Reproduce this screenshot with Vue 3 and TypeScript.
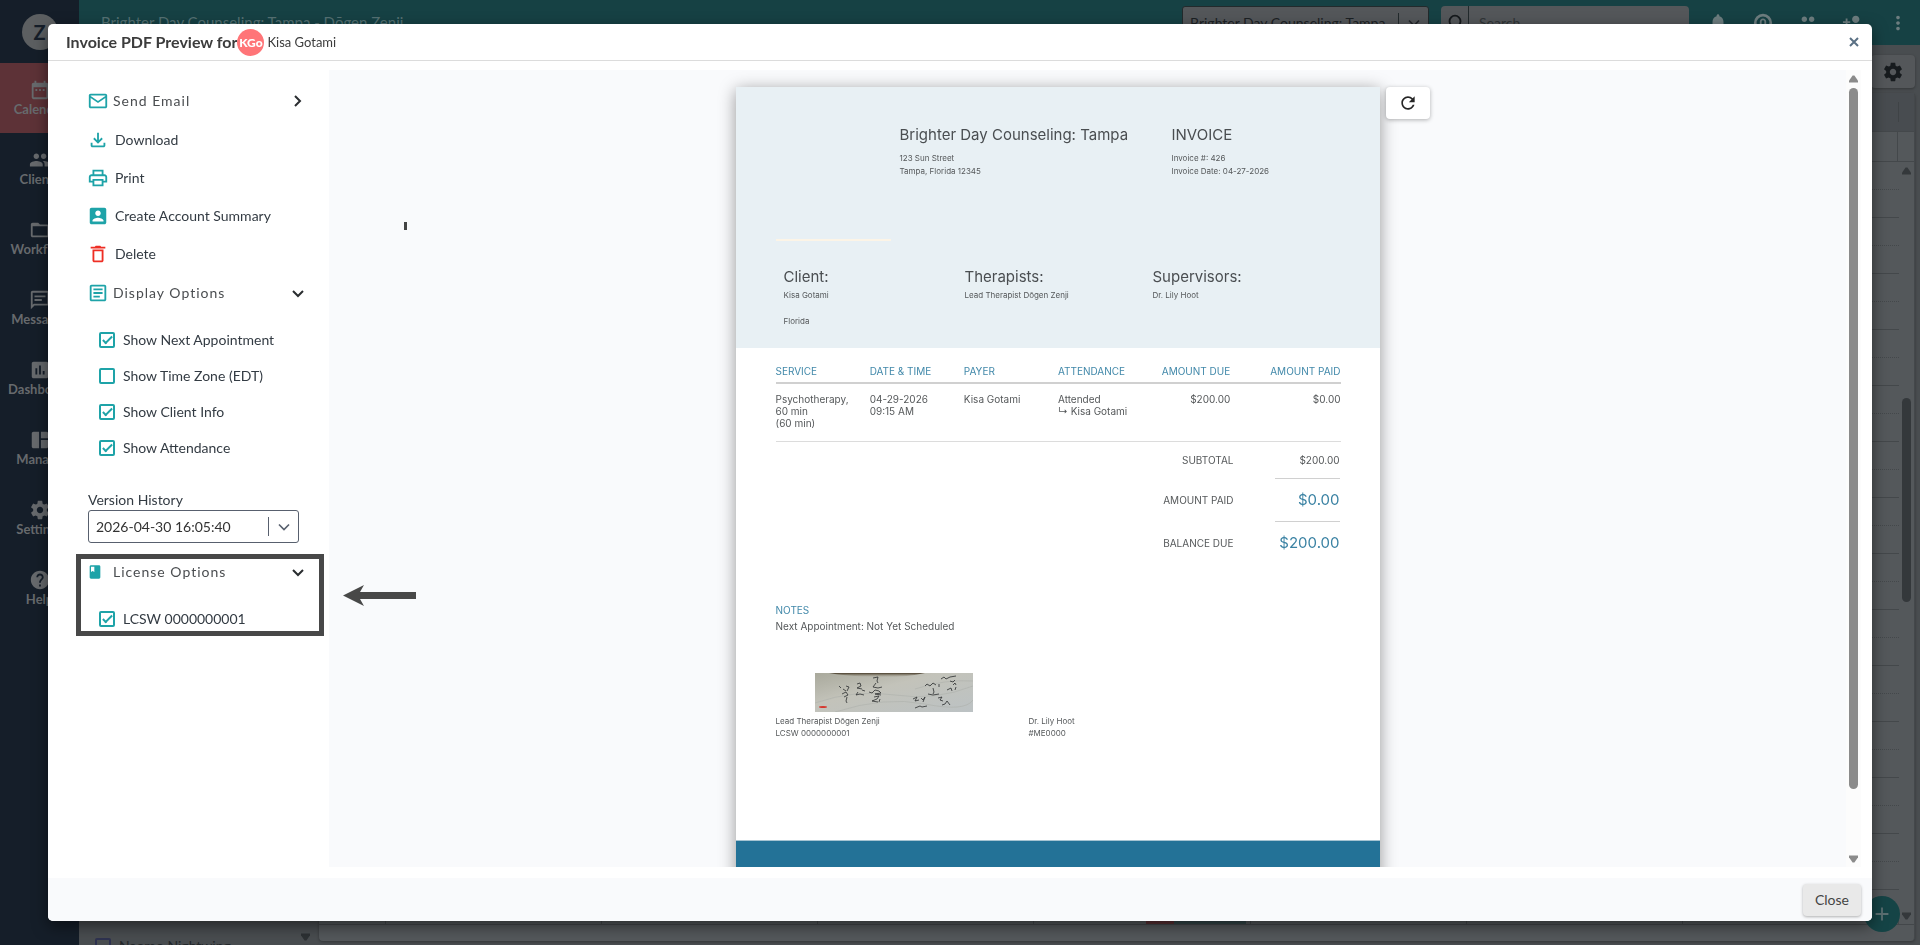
<script setup lang="ts">
import { ref } from 'vue'

const paths = {
  event: 'M9 11H7v2h2v-2zm4 0h-2v2h2v-2zm4 0h-2v2h2v-2zm2-7h-1V2h-2v2H8V2H6v2H5c-1.11 0-1.99.9-1.99 2L3 20c0 1.1.89 2 2 2h14c1.1 0 2-.9 2-2V6c0-1.1-.9-2-2-2zm0 16H5V9h14v11z',
  group: 'M16 11c1.66 0 2.99-1.34 2.99-3S17.66 5 16 5c-1.66 0-3 1.34-3 3s1.34 3 3 3zm-8 0c1.66 0 2.99-1.34 2.99-3S9.66 5 8 5C6.34 5 5 6.34 5 8s1.34 3 3 3zm0 2c-2.33 0-7 1.17-7 3.5V19h14v-2.5c0-2.33-4.67-3.5-7-3.5zm8 0c-.29 0-.62.02-.97.05 1.16.84 1.97 1.97 1.97 3.45V19h6v-2.5c0-2.33-4.67-3.5-7-3.5z',
  folder: 'M20 6h-8l-2-2H4c-1.1 0-1.99.9-1.99 2L2 18c0 1.1.9 2 2 2h16c1.1 0 2-.9 2-2V8c0-1.1-.9-2-2-2zm0 12H4V8h16v10z',
  chat: 'M4 4h16v12H5.17L4 17.17V4m0-2c-1.1 0-1.99.9-1.99 2L2 22l4-4h14c1.1 0 2-.9 2-2V4c0-1.1-.9-2-2-2H4zm2 9h8v2H6v-2zm0-4h12v2H6V7z',
  chart: 'M19 3H5c-1.1 0-2 .9-2 2v14c0 1.1.9 2 2 2h14c1.1 0 2-.9 2-2V5c0-1.1-.9-2-2-2zM9 17H7v-7h2v7zm4 0h-2V7h2v10zm4 0h-2v-4h2v4z',
  board: 'M11 21H5c-1.1 0-2-.9-2-2V5c0-1.1.9-2 2-2h6v18zm2 0h6c1.1 0 2-.9 2-2v-7h-8v9zm8-11V5c0-1.1-.9-2-2-2h-6v7h8z',
  gear: 'M19.43 12.98c.04-.32.07-.64.07-.98s-.03-.66-.07-.98l2.11-1.65c.19-.15.24-.42.12-.64l-2-3.46c-.12-.22-.39-.3-.61-.22l-2.49 1c-.52-.4-1.08-.73-1.69-.98l-.38-2.65C14.46 2.18 14.25 2 14 2h-4c-.25 0-.46.18-.49.42l-.38 2.65c-.61.25-1.17.59-1.69.98l-2.49-1c-.23-.09-.49 0-.61.22l-2 3.46c-.13.22-.07.49.12.64l2.11 1.65c-.04.32-.07.65-.07.98s.03.66.07.98l-2.11 1.65c-.19.15-.24.42-.12.64l2 3.46c.12.22.39.3.61.22l2.49-1c.52.4 1.08.73 1.69.98l.38 2.65c.03.24.24.42.49.42h4c.25 0 .46-.18.49-.42l.38-2.65c.61-.25 1.17-.59 1.69-.98l2.49 1c.23.09.49 0 .61-.22l2-3.46c.12-.22.07-.49-.12-.64l-2.11-1.65zM12 15.5c-1.93 0-3.5-1.57-3.5-3.5s1.57-3.5 3.5-3.5 3.5 1.57 3.5 3.5-1.57 3.5-3.5 3.5z',
  help: 'M12 2C6.48 2 2 6.48 2 12s4.48 10 10 10 10-4.48 10-10S17.52 2 12 2zm1 17h-2v-2h2v2zm2.07-7.75l-.9.92C13.45 12.9 13 13.5 13 15h-2v-.5c0-1.1.45-2.1 1.17-2.83l1.24-1.26c.37-.36.59-.86.59-1.41 0-1.1-.9-2-2-2s-2 .9-2 2H8c0-2.21 1.79-4 4-4s4 1.79 4 4c0 .88-.36 1.68-.93 2.25z',
  bell: 'M12 22c1.1 0 2-.9 2-2h-4c0 1.1.89 2 2 2zm6-6v-5c0-3.07-1.64-5.64-4.5-6.32V4c0-.83-.67-1.5-1.5-1.5s-1.5.67-1.5 1.5v.68C7.63 5.36 6 7.92 6 11v5l-2 2v1h16v-1l-2-2z',
  target: 'M12 2a10 10 0 1 0 0 20 10 10 0 0 0 0-20zm0 3a7 7 0 1 1 0 14 7 7 0 0 1 0-14zm0 2c-2 0-3.500 1.600-3.500 3.500V15h2v-4.500a1.500 1.500 0 0 1 3 0V15h2v-4.500C15.500 8.600 14 7 12 7z',
  addPerson: 'M15 12c2.21 0 4-1.79 4-4s-1.79-4-4-4-4 1.79-4 4 1.79 4 4 4zm-9-2V7H4v3H1v2h3v3h2v-3h3v-2H6zm9 4c-2.67 0-8 1.34-8 4v2h16v-2c0-2.66-5.33-4-8-4z',
  dots: 'M12 8c1.100 0 2-.9 2-2s-.9-2-2-2-2 .9-2 2 .9 2 2 2zm0 2c-1.100 0-2 .9-2 2s.9 2 2 2 2-.9 2-2-.9-2-2-2zm0 6c-1.100 0-2 .9-2 2s.9 2 2 2 2-.9 2-2-.9-2-2-2z',
  mail: 'M20 4H4c-1.1 0-2 .9-2 2v12c0 1.1.9 2 2 2h16c1.1 0 2-.9 2-2V6c0-1.1-.9-2-2-2zm0 2v.5l-8 5.500-8-5.500V6h16zM4 18V8.800l8 5.400 8-5.400V18H4z',
  download: 'M11 4h2v8.200l2.800-2.800 1.400 1.400L12 16l-5.200-5.200 1.400-1.400 2.800 2.800V4zM4 15h2v3h12v-3h2v3c0 1.100-.9 2-2 2H6c-1.100 0-2-.9-2-2v-3z',
  print: 'M19 8h-1V3H6v5H5c-1.66 0-3 1.34-3 3v6h4v4h12v-4h4v-6c0-1.66-1.34-3-3-3zM8 5h8v3H8V5zm8 12v2H8v-4h8v2zm2-2v-2H6v2H4v-4c0-.55.45-1 1-1h14c.55 0 1 .45 1 1v4h-2z',
  account: 'M3 5v14c0 1.1.89 2 2 2h14c1.1 0 2-.9 2-2V5c0-1.1-.9-2-2-2H5c-1.11 0-2 .9-2 2zm12 4c0 1.66-1.34 3-3 3s-3-1.34-3-3 1.34-3 3-3 3 1.34 3 3zm-9 8c0-2 4-3.1 6-3.1s6 1.1 6 3.1v1H6v-1z',
  trash: 'M6 19c0 1.1.9 2 2 2h8c1.1 0 2-.9 2-2V7H6v12zM8 9h8v10H8V9zm7.5-5l-1-1h-5l-1 1H4v2h16V4z',
  article: 'M19 5v14H5V5h14m0-2H5c-1.1 0-2 .9-2 2v14c0 1.1.9 2 2 2h14c1.1 0 2-.9 2-2V5c0-1.1-.9-2-2-2zM14 17H7v-2h7v2zm3-4H7v-2h10v2zm0-4H7V7h10v2z',
  book: 'M18 2H6c-1.100 0-2 .9-2 2v16c0 1.100.9 2 2 2h12c1.100 0 2-.9 2-2V4c0-1.100-.9-2-2-2zM6 4h5v8l-2.500-1.500L6 12V4z',
  refresh: 'M17.65 6.35C16.2 4.9 14.21 4 12 4c-4.42 0-7.99 3.58-7.99 8s3.57 8 7.99 8c3.73 0 6.84-2.55 7.73-6h-2.08c-.82 2.33-3.04 4-5.65 4-3.31 0-6-2.69-6-6s2.69-6 6-6c1.66 0 3.14.69 4.22 1.78L13 11h7V4l-2.35 2.35z',
}

const nav = [
  { label: 'Calendar', icon: paths.event, active: true },
  { label: 'Clients', icon: paths.group },
  { label: 'Workflow', icon: paths.folder },
  { label: 'Messages', icon: paths.chat },
  { label: 'Dashboard', icon: paths.chart },
  { label: 'Manage', icon: paths.board },
  { label: 'Settings', icon: paths.gear },
  { label: 'Help', icon: paths.help },
]
const tools = [
  { label: 'Notifications', icon: paths.bell },
  { label: 'Support', icon: paths.target },
  { label: 'Clients', icon: paths.group },
  { label: 'Add client', icon: paths.addPerson },
  { label: 'More', icon: paths.dots },
]
const actions = [
  { label: 'Download', icon: paths.download },
  { label: 'Print', icon: paths.print },
  { label: 'Create Account Summary', icon: paths.account },
  { label: 'Delete', icon: paths.trash, danger: true },
]
const display = ref([
  { label: 'Show Next Appointment', on: true },
  { label: 'Show Time Zone (EDT)', on: false },
  { label: 'Show Client Info', on: true },
  { label: 'Show Attendance', on: true },
])
const licenses = ref([{ label: 'LCSW 0000000001', on: true }])
const version = ref('2026-04-30 16:05:40')
const totals = [
  { label: 'SUBTOTAL', value: '$200.00', big: false },
  { label: 'AMOUNT PAID', value: '$0.00', big: true },
  { label: 'BALANCE DUE', value: '$200.00', big: true },
]
</script>

<template>
  <div class="app">
    <nav class="rail">
      <div class="logo"><span>Z</span></div>
      <a v-for="n in nav" :key="n.label" href="#" class="rail-item" :class="{ active: n.active }">
        <svg viewBox="0 0 24 24"><path :d="n.icon" /></svg>
        <span>{{ n.label }}</span>
      </a>
    </nav>
    <div class="main">
      <header class="topbar">
        <span class="practice">Brighter Day Counseling: Tampa - Dōgen Zenji</span>
        <div class="combo top-combo">
          <select aria-label="Location"><option>Brighter Day Counseling: Tampa</option></select>
          <i></i>
          <svg viewBox="0 0 24 24"><path d="M6 9l6 6 6-6" /></svg>
        </div>
        <div class="search">
          <button type="button" aria-label="Search">
            <svg viewBox="0 0 24 24"><circle cx="12" cy="10" r="6" /><path d="M16 14l5 6" /></svg>
          </button>
          <input type="text" placeholder="Search" aria-label="Search text" />
        </div>
        <div class="tools">
          <button v-for="t in tools" :key="t.label" type="button" :aria-label="t.label">
            <svg viewBox="0 0 24 24"><path :d="t.icon" /></svg>
          </button>
        </div>
      </header>
      <div class="workspace">
        <div class="toolbar">
          <button type="button" aria-label="Calendar settings"><svg viewBox="0 0 24 24"><path :d="paths.gear" /></svg></button>
        </div>
        <div class="split">
          <aside class="people">
            <label><input type="checkbox" />Naomo Nightwing</label>
            <svg viewBox="0 0 10 8"><path d="M0 0h10v2L6 8H4L0 2z" /></svg>
          </aside>
          <section class="calendar">
            <div class="cal-head"><i></i></div>
            <div class="cal-allday"><i></i></div>
            <div class="cal-body">
              <div class="cal-rows">
                <div v-for="r in 28" :key="r" class="cal-row"><span v-for="c in 8" :key="c" :class="{ booked: r === 28 && c === 5 }"></span></div>
              </div>
              <div class="bar">
                <svg viewBox="0 0 10 8"><path d="M4 0h2l4 6v2H0V6z" /></svg>
                <div class="bar-track"><div class="cal-thumb"></div></div>
                <svg viewBox="0 0 10 8"><path d="M0 0h10v2L6 8H4L0 2z" /></svg>
              </div>
            </div>
            <div class="cal-foot"></div>
          </section>
        </div>
      </div>
      <button type="button" class="fab" aria-label="Add"><svg viewBox="0 0 24 24"><path d="M12 5v14M5 12h14" /></svg></button>
    </div>

    <div class="overlay">
      <div class="dialog" role="dialog" aria-labelledby="dialog-title">
        <header class="dialog-head">
          <h1 id="dialog-title">Invoice PDF Preview for</h1>
          <span class="avatar">KGo</span>
          <span class="client">Kisa Gotami</span>
          <button type="button" class="dismiss" aria-label="Dismiss"><svg viewBox="0 0 12 12"><path d="M2 2l8 8M10 2l-8 8" /></svg></button>
        </header>
        <div class="dialog-body">
          <aside class="options">
            <button type="button" class="section-head">
              <svg class="ico" viewBox="0 0 24 24"><path :d="paths.mail" /></svg>
              <span>Send Email</span>
              <svg class="chev" viewBox="0 0 20 20"><path d="M7 5l5 5-5 5" /></svg>
            </button>
            <button v-for="a in actions" :key="a.label" type="button" class="action">
              <svg class="ico" :class="{ danger: a.danger }" viewBox="0 0 24 24"><path :d="a.icon" /></svg>
              <span>{{ a.label }}</span>
            </button>
            <button type="button" class="section-head">
              <svg class="ico" viewBox="0 0 24 24"><path :d="paths.article" /></svg>
              <span>Display Options</span>
              <svg class="chev" viewBox="0 0 20 20"><path d="M5 8l5 5 5-5" /></svg>
            </button>
            <div class="checks">
              <label v-for="d in display" :key="d.label"><input v-model="d.on" type="checkbox" />{{ d.label }}</label>
            </div>
            <div class="version">
              <label for="version">Version History</label>
              <div class="combo">
                <select id="version" v-model="version"><option>2026-04-30 16:05:40</option></select>
                <i></i>
                <svg viewBox="0 0 24 24"><path d="M6 9l6 6 6-6" /></svg>
              </div>
            </div>
            <div class="licenses">
              <button type="button" class="section-head">
                <svg class="ico book" viewBox="0 0 24 24"><path :d="paths.book" /></svg>
                <span>License Options</span>
                <svg class="chev" viewBox="0 0 20 20"><path d="M5 8l5 5 5-5" /></svg>
              </button>
              <div class="checks">
                <label v-for="l in licenses" :key="l.label"><input v-model="l.on" type="checkbox" />{{ l.label }}</label>
              </div>
              <div class="frame"></div>
              <svg class="arrow" viewBox="0 0 73 21"><path d="M0 10.500L21 0l-4 7h56v7H17l4 7z" /></svg>
            </div>
          </aside>

          <main class="preview">
            <div class="tick"></div>
            <div class="stage">
              <article class="page">
                <header class="inv-head">
                  <div class="inv-top">
                    <div class="inv-logo"></div>
                    <div>
                      <h2>Brighter Day Counseling: Tampa</h2>
                      <p>123 Sun Street</p>
                      <p>Tampa, Florida 12345</p>
                    </div>
                    <div>
                      <h2>INVOICE</h2>
                      <p>Invoice #: 426</p>
                      <p>Invoice Date: 04-27-2026</p>
                    </div>
                  </div>
                  <div class="inv-parties">
                    <div>
                      <h3>Client:</h3>
                      <p>Kisa Gotami</p>
                      <p class="second">Florida</p>
                    </div>
                    <div>
                      <h3>Therapists:</h3>
                      <p>Lead Therapist Dōgen Zenji</p>
                    </div>
                    <div>
                      <h3>Supervisors:</h3>
                      <p>Dr. Lily Hoot</p>
                    </div>
                  </div>
                </header>
                <div class="inv-body">
                  <table>
                    <thead>
                      <tr><th>SERVICE</th><th>DATE &amp; TIME</th><th>PAYER</th><th>ATTENDANCE</th><th class="num due">AMOUNT DUE</th><th class="num">AMOUNT PAID</th></tr>
                    </thead>
                    <tbody>
                      <tr>
                        <td>Psychotherapy,<br />60 min<br />(60 min)</td>
                        <td>04-29-2026<br />09:15 AM</td>
                        <td>Kisa Gotami</td>
                        <td>Attended<br />↳ Kisa Gotami</td>
                        <td class="num due">$200.00</td>
                        <td class="num">$0.00</td>
                      </tr>
                    </tbody>
                  </table>
                  <dl class="totals">
                    <div v-for="t in totals" :key="t.label">
                      <dt>{{ t.label }}</dt>
                      <dd :class="{ big: t.big }">{{ t.value }}</dd>
                    </div>
                  </dl>
                  <section class="notes">
                    <h4>NOTES</h4>
                    <p>Next Appointment: Not Yet Scheduled</p>
                  </section>
                  <div class="signatures">
                    <div>
                      <svg class="signature" viewBox="0 0 158 39">
                        <defs>
                          <linearGradient id="paper" x1="0" y1="0" x2="1" y2="1">
                            <stop offset="0" stop-color="#a9a99c" />
                            <stop offset="0.4" stop-color="#c3c3ba" />
                            <stop offset="1" stop-color="#bcc2c4" />
                          </linearGradient>
                          <linearGradient id="shade" x1="0" y1="0" x2="0" y2="1">
                            <stop offset="0" stop-color="#453a28" />
                            <stop offset="1" stop-color="#9a927f" stop-opacity="0" />
                          </linearGradient>
                        </defs>
                        <rect width="158" height="39" fill="url(#paper)" />
                        <path d="M14 0H110Q90 5 60 4T14 0z" fill="url(#shade)" />
                        <path class="fold" d="M0 30q40-14 80-8t78-9M20 39q50-16 90-8t48-4M100 16q30-10 58-8" />
                        <path class="ink" d="M24 13l2 2M31 13l3 1-2 4M28 16l3 2M27 21l4-2 2 3-4 2M32 24l-1 4 1 2M42 11l3-1 1 3-4 2 5 1M43 19l-2 3 4-1 4 1M47 17l3 1M58 5l5-1-1 4 1 2M61 10l-3 4 5 1 4-1M54 19l3 1 3-3 4 1 2 2-6 1 6 1M59 24l5-1-2 3-5 2 6 1M65 26l-1 3" />
                        <path class="ink" d="M110 13l2-2 3 2 3-3 3 2M124 11v3M118 15l1 4-1 2M113 21l5 1 6-1M126 6l3-2 2 2 4-2 6-1M135 8l3 1 2-2M138 12l2-2 1 2M132 17l4-2 1 3M141 14l-1 3M98 26l4-2-2 4 4-1M106 25l2 2 2-3-2 5M100 35l5-2 2 1 5-1M123 25l4-1-2 3 3 1M127 32l3-1 2-3 3 4" />
                        <ellipse cx="8" cy="34" rx="4" ry="1" fill="#d5382f" />
                      </svg>
                      <p>Lead Therapist Dōgen Zenji</p>
                      <p>LCSW 0000000001</p>
                    </div>
                    <div class="supervisor">
                      <p>Dr. Lily Hoot</p>
                      <p>#ME0000</p>
                    </div>
                  </div>
                </div>
                <footer class="inv-foot"></footer>
              </article>
              <button type="button" class="reload" aria-label="Refresh"><svg viewBox="0 0 24 24"><path :d="paths.refresh" /></svg></button>
            </div>
            <div class="bar scroll">
              <svg viewBox="0 0 10 8"><path d="M4 0h2l4 6v2H0V6z" /></svg>
              <div class="bar-track"><div class="thumb"></div></div>
              <svg viewBox="0 0 10 8"><path d="M0 0h10v2L6 8H4L0 2z" /></svg>
            </div>
          </main>
        </div>
        <footer class="dialog-foot"><button type="button">Close</button></footer>
      </div>
    </div>
  </div>
</template>

<style>
body { margin: 0; }
</style>

<style scoped>
.app { display: flex; height: 100vh; overflow: hidden; background: #494d50; color: #333b43; font: 14px/18px Lato, "Open Sans", sans-serif; }
.app *, .app *::before { box-sizing: border-box; }
button, input, select { font: inherit; color: inherit; margin: 0; padding: 0; border: 0; background: none; }
h1, h2, h3, h4, p, dl, dd { margin: 0; font-weight: 400; }
svg { display: block; flex: none; fill: currentColor; }

.rail { flex: none; width: 79px; background: #151e29; color: #676a6d; }
.logo { display: flex; align-items: center; justify-content: center; height: 63px; }
.logo span { width: 36px; height: 36px; border-radius: 50%; background: #5c5f61; color: #151e29; font-size: 20px; line-height: 36px; font-weight: 700; text-align: center; }
.rail-item { display: flex; flex-direction: column; align-items: center; height: 70px; padding-top: 15px; color: inherit; text-decoration: none; line-height: 15px; font-size: 13px; font-weight: 700; }
.rail-item svg { width: 24px; height: 24px; padding: 1px; }
.rail-item.active { background: #5d3237; }

.main { flex: 1; min-width: 0; display: flex; flex-direction: column; position: relative; }
.topbar { flex: none; display: flex; align-items: center; height: 45px; padding: 0 10px 0 22px; background: #164144; color: #6d7d7f; }
.practice { flex: 1; font-size: 15px; line-height: 16px; padding-bottom: 2px; color: #557173; }
.combo { display: flex; align-items: center; height: 33px; border: 1px solid #58606e; border-radius: 3px; color: #333; }
.combo select { flex: 1; min-width: 0; height: 100%; padding-left: 7px; appearance: none; outline: 0; }
.combo i { width: 1px; height: 19px; background: #58606e; }
.combo svg { width: 20px; height: 20px; margin: 0 4px 0 5px; fill: none; stroke: #58606e; stroke-width: 2; }
.top-combo { width: 247px; border-color: #222a2c; background: #54575a; color: #1c2124; }
.top-combo i { background: #222a2c; }
.top-combo svg { stroke: #22272b; }
.search { display: flex; width: 248px; height: 33px; margin: 0 17px 0 12px; border-radius: 4px; overflow: hidden; background: #54575a; }
.search button { width: 28px; border-right: 1px solid #222a2c; color: #15191c; }
.search button svg { width: 22px; height: 22px; margin: auto; fill: none; stroke: currentColor; stroke-width: 2; }
.search input { flex: 1; min-width: 0; padding-left: 10px; }
.search input::placeholder { color: #303537; opacity: 1; }
.tools { display: flex; gap: 21px; }
.tools svg { width: 24px; height: 24px; padding: 1px; }

.workspace { flex: 1; display: flex; flex-direction: column; padding: 10px 5px 5px 0; }
.toolbar { display: flex; justify-content: flex-end; height: 38px; }
.toolbar button { width: 44px; height: 33px; border-radius: 4px; background: #54575a; color: #171b1e; box-shadow: 0 1px 3px rgba(0, 0, 0, 0.3); }
.toolbar svg { width: 22px; height: 22px; margin: auto; }
.split { flex: 1; display: flex; }
.people { width: 240px; display: flex; align-items: flex-end; justify-content: space-between; padding: 0 9px 0 16px; color: #24282b; }
.people label { display: flex; align-items: center; gap: 8px; margin-bottom: -14px; }
.people input { appearance: none; width: 16px; height: 16px; border: 2px solid #2e3250; border-radius: 2px; }
.people svg { width: 9px; height: 8px; color: #2d3134; }
.calendar { flex: 1; display: flex; flex-direction: column; border-right: 1px solid #44484b; border-radius: 4px; background: #54585b; box-shadow: 0 1px 3px rgba(0, 0, 0, 0.3); }
.cal-head { display: flex; justify-content: flex-end; align-items: center; height: 38px; padding-right: 15px; background: #484c50; }
.cal-head i { width: 1px; height: 20px; background: #3f4346; }
.cal-allday { display: flex; justify-content: flex-end; height: 31px; padding-right: 16px; border: solid #44484b; border-width: 1px 0; }
.cal-allday i { width: 1px; background: #44484b; }
.cal-body { flex: 1; min-height: 0; display: flex; border-bottom: 1px solid #43474a; }
.cal-rows { flex: 1; display: flex; flex-direction: column; justify-content: flex-end; }
.cal-row { display: grid; grid-template-columns: 67px repeat(7, 1fr); height: 28px; border-bottom: 1px solid #44484b; }
.cal-row:nth-child(odd) { border-bottom-style: dotted; }
.cal-row:last-child { height: 6px; border: 0; }
.cal-row:last-child span { border-right: 1px solid #44484b; }
.cal-row .booked { background: linear-gradient(90deg, transparent 52%, #5a3034 52% 65%, #35484a 65% 98%, transparent 98%); }
.cal-foot { height: 16px; }
.bar { display: flex; flex-direction: column; align-items: center; justify-content: space-between; width: 15px; color: #34383b; padding: 5px 0 4px; }
.bar svg { width: 9px; height: 8px; }
.bar-track { flex: 1; width: 9px; padding: 5px 0; }
.cal-thumb { height: 28%; margin-top: 218px; border-radius: 5px; background: #34383b; }
.fab { position: absolute; right: 20px; bottom: 13px; width: 36px; height: 36px; border-radius: 50%; background: #154446; color: #5c7072; }
.fab svg { width: 22px; height: 22px; margin: auto; stroke: currentColor; stroke-width: 2; }

.overlay { position: fixed; inset: 0; display: flex; padding: 24px 48px; }
.dialog { flex: 1; display: flex; flex-direction: column; border-radius: 5px; background: #fff; box-shadow: 0 5px 15px rgba(0, 0, 0, 0.5); overflow: hidden; }
.dialog-head { flex: none; display: flex; align-items: center; height: 37px; padding: 0 12px 0 18px; border-bottom: 1px solid #dcdcdc; color: #3c3c3c; }
.dialog-head h1 { font-size: 16px; font-weight: 700; }
.avatar { width: 27px; height: 27px; border-radius: 50%; background: #ff7578; color: #fff; font-size: 12px; line-height: 27px; font-weight: 900; text-align: center; }
.client { margin-left: 3px; font-size: 13px; }
.dismiss { margin-left: auto; color: #5a7084; }
.dismiss svg { width: 12px; height: 12px; stroke: currentColor; stroke-width: 2; }
.dialog-body { flex: 1; min-height: 0; display: flex; padding: 9px 11px 11px 0; }
.options { flex: none; width: 281px; padding: 11px 21px 0 39px; }
.section-head, .action { display: flex; align-items: center; width: 100%; text-align: left; }
.section-head { height: 40px; gap: 4px; letter-spacing: 1px; color: #4a4d50; }
.section-head span { flex: 1; }
.action { height: 38px; gap: 6px; }
.ico { width: 22px; height: 22px; color: #1ea3a8; }
.ico.danger { color: #ee2e24; }
.ico.book { width: 16px; height: 16px; margin-right: 6px; }
.chev { width: 20px; height: 20px; fill: none; stroke: #2a2d30; stroke-width: 2; }
.checks { padding: 9px 0 0 12px; }
.checks label { display: flex; align-items: center; gap: 8px; height: 36px; }
.checks input { appearance: none; width: 16px; height: 16px; border: 2px solid #1ea3a8; border-radius: 2px; }
.checks input:checked::before { content: ""; display: block; width: 5px; height: 10px; margin: 0 0 0 4px; border: solid #1ea3a8; border-width: 0 2px 2px 0; transform: rotate(45deg); }
.version { margin-top: 25px; padding: 0 9px 0 1px; }
.version label { display: block; height: 19px; }
.licenses { position: relative; margin-top: 9px; }
.frame { position: absolute; left: -11px; top: 2px; width: 248px; height: 82px; border: 5px solid #484848; pointer-events: none; }
.arrow { position: absolute; left: 256px; top: 33px; width: 73px; height: 21px; color: #484848; z-index: 1; }

.preview { flex: 1; min-width: 0; display: flex; position: relative; background: #f9fafc; overflow: hidden; }
.tick { position: absolute; left: 75px; top: 152px; width: 3px; height: 8px; background: #444; }
.stage { flex: 1; display: flex; justify-content: center; align-items: flex-start; gap: 6px; padding: 17px 10px 0 0; }
.page { width: 644px; background: #fff; color: #55585a; font: 10px/12px Inter, "Open Sans", sans-serif; box-shadow: 0 3px 16px rgba(0, 0, 0, 0.4); }
.reload { width: 44px; height: 32px; border-radius: 4px; background: #fff; box-shadow: 0 1px 4px rgba(0, 0, 0, 0.3); color: #262626; }
.reload svg { width: 20px; height: 20px; margin: auto; }
.scroll { background: #fcfcfc; color: #8b8b8b; }
.thumb { height: 92%; border-radius: 5px; background: #8b8b8b; }
.inv-head { padding: 36px 39px 20px 40px; background: #e8f0f4; font-size: 8px; line-height: 13px; }
.inv-head h2, .inv-head h3 { font-size: 15px; line-height: 24px; color: #4a4e51; }
.inv-head h2 { margin-bottom: 5px; }
.inv-top { display: grid; grid-template-columns: 115px 263px auto; column-gap: 9px; height: 118px; }
.inv-logo { border-bottom: 2px solid #fcf4e6; }
.inv-parties { display: grid; grid-template-columns: 181px 188px auto; padding: 24px 0 0 8px; }
.second { margin-top: 13px; }
.inv-body { padding: 0 39px 101px 40px; }
table { width: 100%; table-layout: fixed; border-collapse: collapse; }
th, td { padding: 0; text-align: left; vertical-align: top; font-weight: 400; white-space: nowrap; }
th { height: 34px; padding: 16px 0 4px; line-height: 14px; color: #4289aa; border-bottom: 2px solid #d0d0d0; }
td { padding: 9px 0 12px; border-bottom: 1px solid #dcdcdc; }
.num { text-align: right; }
.due { padding-right: 16px; }
.totals { padding-right: 1px; }
.totals > div { display: grid; grid-template-columns: 1fr 65px; column-gap: 41px; height: 43px; line-height: 42px; text-align: right; }
.totals > div:first-child { height: 37px; line-height: 36px; }
.totals > div:not(:last-child) dd { border-bottom: 1px solid #d0d0d0; }
.totals .big { font-size: 15px; color: #3a82a3; }
.notes { margin-top: 37px; line-height: 16px; }
.notes h4 { color: #4289aa; }
.signatures { display: grid; grid-template-columns: 253px auto; align-items: end; margin-top: 39px; font-size: 8px; }
.signature { width: 158px; height: 39px; margin: 0 0 3px 39px; }
.signature .fold { fill: none; stroke: #aeb1ac; stroke-width: 1; opacity: 0.6; }
.signature .ink { fill: none; stroke: #2c2e30; stroke-width: 1; opacity: 0.8; }
.inv-foot { height: 80px; border-top: 1px solid #a5c4d2; background: #237297; }

.dialog-foot { flex: none; display: flex; justify-content: flex-end; height: 43px; padding: 6px 11px 5px; background: #f9fafc; }
.dialog-foot button { width: 58px; border-radius: 4px; background: #e9e9e9; box-shadow: 0 1px 3px rgba(0, 0, 0, 0.3); color: #444; }
</style>
